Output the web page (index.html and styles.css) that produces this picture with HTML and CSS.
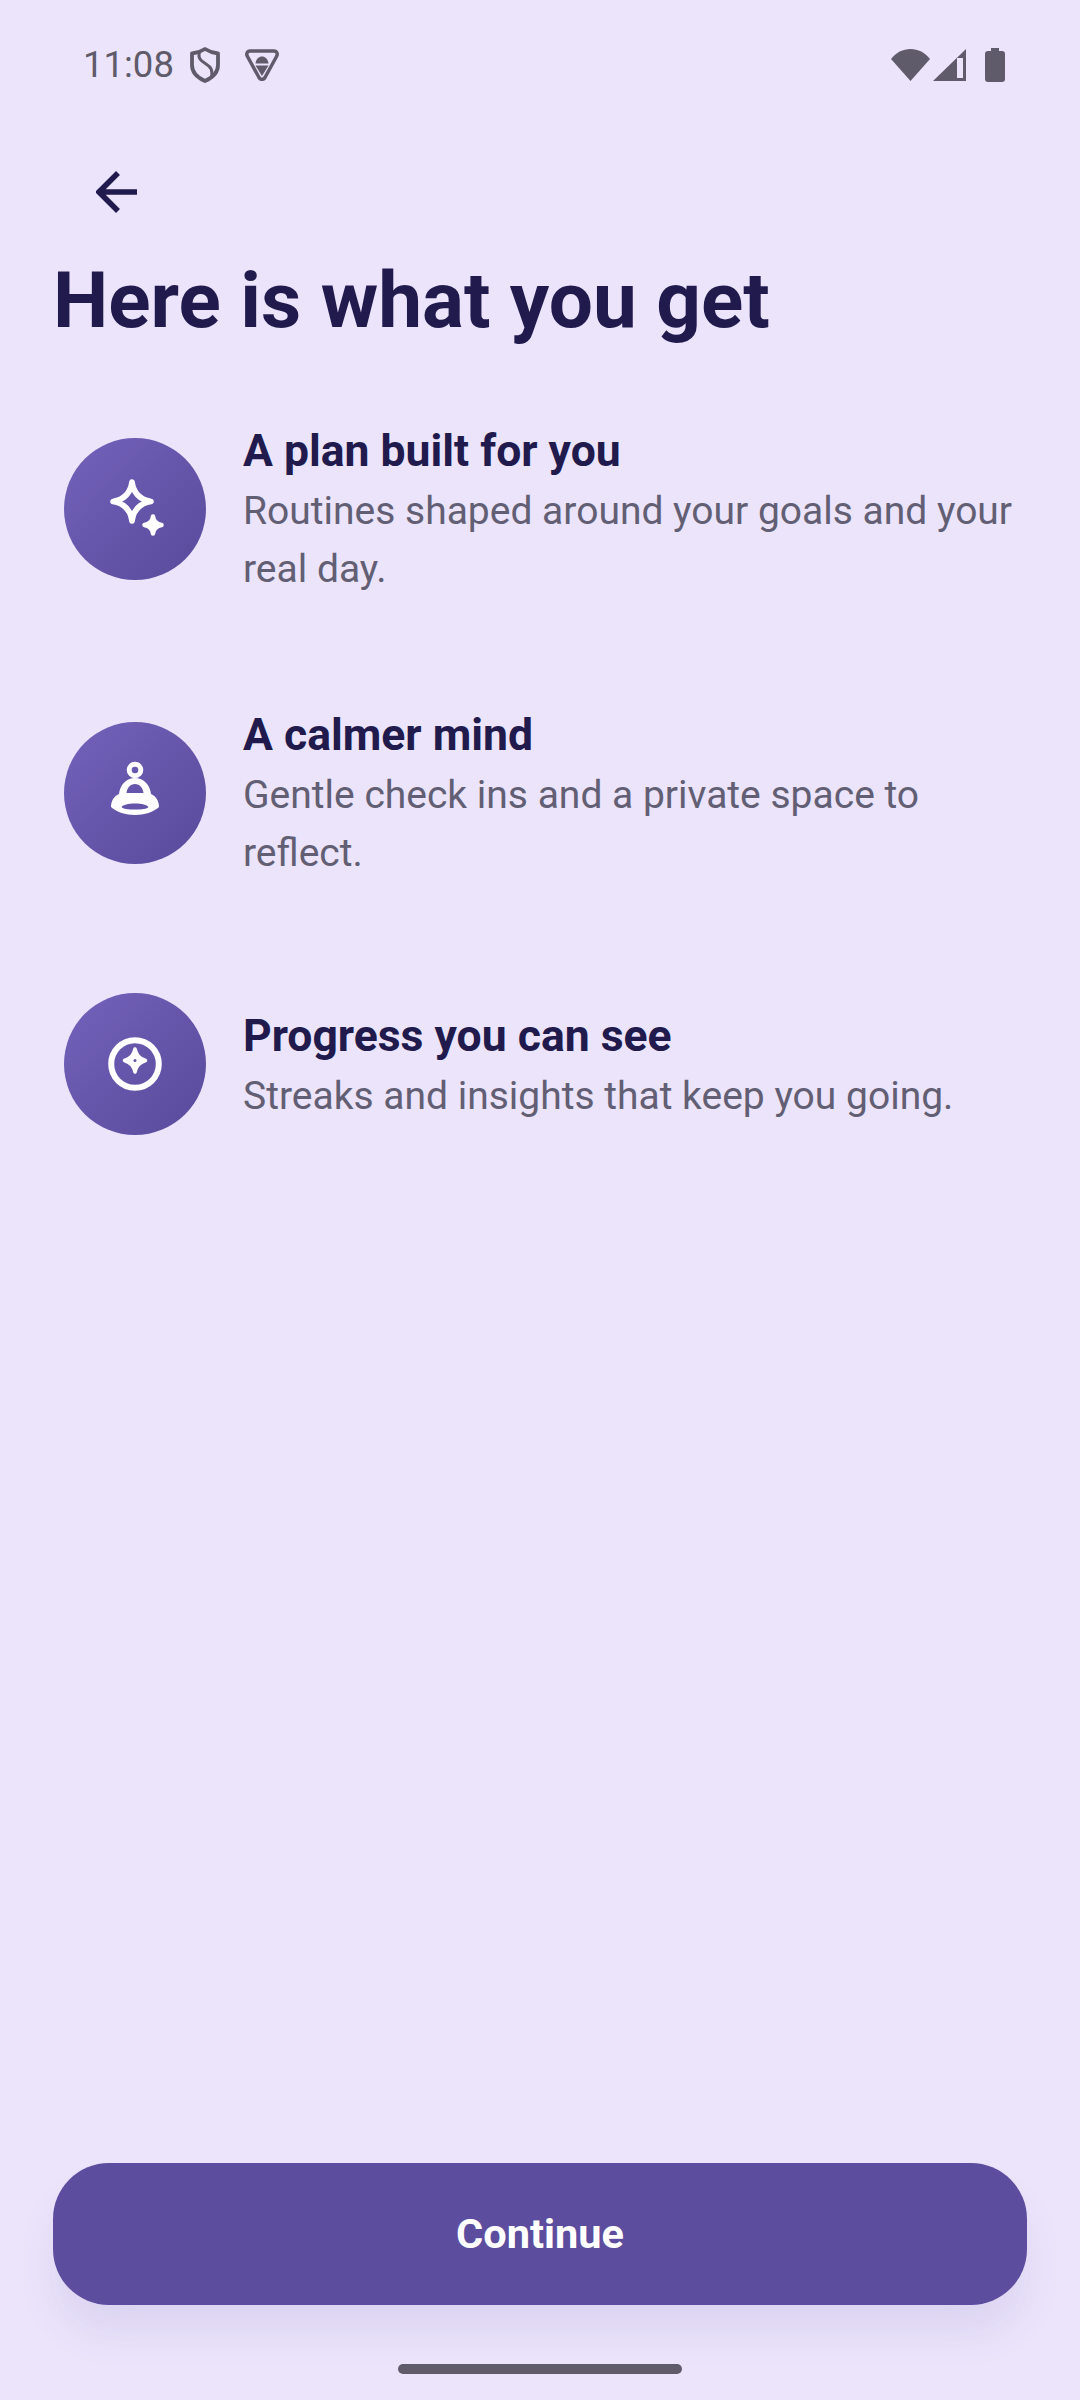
FILE: index.html
```html
<!DOCTYPE html>
<html lang="en">
<head>
<meta charset="utf-8">
<title>Here is what you get</title>
<link rel="stylesheet" href="styles.css">
</head>
<body>
<main class="page">
  <header class="status">
    <div class="status-left">
      <span class="time">11:08</span>
      <svg class="ic-shield" viewBox="0 0 30 36"><path d="M15 2 C19 4.500 23 6 28 6.500 V18 C28 26 22 31 15 34 C8 31 2 26 2 18 V6.500 C7 6 11 4.500 15 2 Z" fill="none" stroke="#5f5b6b" stroke-width="3.800" stroke-linejoin="round"/><path d="M10 4 C7 11 11 14 16 17 C21 20 23 23 21.500 31" fill="none" stroke="#5f5b6b" stroke-width="3"/></svg>
      <svg class="ic-tri" viewBox="0 0 34 32"><path d="M5 2 H29 C32 2 33 5 31.500 7.500 L20 28.500 C18.500 31 15.500 31 14 28.500 L2.500 7.500 C1 5 2 2 5 2 Z" fill="none" stroke="#5f5b6b" stroke-width="3.500"/><path d="M10.500 14.500 C11 10 14 7.500 17 7.500 C20 7.500 23 10 23.500 14.500 Z M10.500 16.500 H23.500 L17 27 Z" fill="#5f5b6b"/></svg>
    </div>
    <div class="status-right">
      <svg class="ic-wifi" viewBox="0 0 39 32"><path d="M0 10 C5 3.500 12 0 19.500 0 C27 0 34 3.500 39 10 L19.500 32 Z" fill="#5f5b6b"/></svg>
      <svg class="ic-signal" viewBox="0 0 33 32"><path fill-rule="evenodd" d="M33 0 V32 H0 Z M24 9 V29 H30 V9 Z" fill="#5f5b6b"/></svg>
      <svg class="ic-batt" viewBox="0 0 20 34"><path d="M6 0 H14 V3 H17 C19 3 20 4 20 6 V31 C20 33 19 34 17 34 H3 C1 34 0 33 0 31 V6 C0 4 1 3 3 3 H6 Z" fill="#5f5b6b"/></svg>
    </div>
  </header>

  <nav class="nav">
    <svg class="ic-back" viewBox="0 0 42 42"><path d="M41 21 H4 M22 2 L3 21 L22 40" fill="none" stroke="#211a4c" stroke-width="5.500"/></svg>
  </nav>

  <h1 class="title">Here is what you get</h1>

  <section class="list">
    <article class="item">
      <div class="badge">
        <svg viewBox="0 0 142 142"><path d="M68 44 C69.500 55 75 61.500 87 63.500 C75 65.500 69.500 72 68 83 C66.500 72 61 65.500 49 63.500 C61 61.500 66.500 55 68 44 Z" fill="none" stroke="#fff" stroke-width="5.600" stroke-linejoin="round"/><path d="M89 78.500 C89.500 83.500 92 86 97.500 87 C92 88 89.500 90.500 89 95.500 C88.500 90.500 86 88 80.500 87 C86 86 88.500 83.500 89 78.500 Z" fill="#fff" stroke="#fff" stroke-width="4.500" stroke-linejoin="round"/></svg>
      </div>
      <div class="copy">
        <h2 class="item-title">A plan built for you</h2>
        <p class="item-text">Routines shaped around your goals and your real day.</p>
      </div>
    </article>
    <article class="item">
      <div class="badge">
        <svg viewBox="0 0 142 142"><circle cx="71" cy="48" r="5.800" fill="none" stroke="#fff" stroke-width="5"/><path fill-rule="evenodd" d="M71 56 C80 56 86 63 87 72 C92 74 95 79 95 85 C90 90 80 93 71 93 C62 93 52 90 47 85 C47 79 50 74 55 72 C56 63 62 56 71 56 Z M71 62 C66 62 63 66 62.500 71 H79.500 C79 66 76 62 71 62 Z M71 81.500 C64 81.500 59 83 57.500 85 C59 87 64 87.500 71 87.500 C78 87.500 83 87 84.500 85 C83 83 78 81.500 71 81.500 Z" fill="#fff"/></svg>
      </div>
      <div class="copy">
        <h2 class="item-title">A calmer mind</h2>
        <p class="item-text">Gentle check ins and a private space to reflect.</p>
      </div>
    </article>
    <article class="item">
      <div class="badge">
        <svg viewBox="0 0 142 142"><circle cx="71" cy="71" r="23.800" fill="none" stroke="#fff" stroke-width="6"/><path d="M71 56 C72.500 62 75 65 81.500 67.500 C75 70 72.500 73 71 79 C69.500 73 67 70 60.500 67.500 C67 65 69.500 62 71 56 Z" fill="#fff" stroke="#fff" stroke-width="3.500" stroke-linejoin="round"/><circle cx="71" cy="67.500" r="1.500" fill="#6555a8"/></svg>
      </div>
      <div class="copy">
        <h2 class="item-title">Progress you can see</h2>
        <p class="item-text">Streaks and insights that keep you going.</p>
      </div>
    </article>
  </section>

  <button class="cta">Continue</button>
  <div class="home-bar"></div>
</main>
</body>
</html>
```
FILE: styles.css
```css
* { box-sizing: border-box; }
html, body { margin: 0; padding: 0; }
body { background: #ebe4fb; font-family: Roboto, "Liberation Sans", sans-serif; }
.page { width: 1080px; height: 2400px; display: flex; flex-direction: column; overflow: hidden; background: #ebe4fb; }

.status { height: 130px; flex: none; display: flex; align-items: center; justify-content: space-between; padding: 0 75px 0 83px; }
.status-left, .status-right { display: flex; align-items: center; }
.time { font-size: 36.500px; line-height: 42px; color: #5f5b6b; }
.ic-shield { width: 30px; height: 36px; margin-left: 16px; }
.ic-tri { width: 34px; height: 32px; margin-left: 25px; }
.ic-wifi { width: 39px; height: 32px; }
.ic-signal { width: 33px; height: 32px; margin-left: 3px; }
.ic-batt { width: 20px; height: 34px; margin-left: 19px; }

.nav { flex: none; margin-top: 41px; height: 42px; padding-left: 96px; display: flex; }
.ic-back { width: 42px; height: 42px; }

.title { flex: none; margin: 43px 0 0 53px; font-size: 78.300px; line-height: 88px; font-weight: 700; color: #211a4c; }

.list { flex: none; margin-top: 75px; display: flex; flex-direction: column; gap: 105px; padding: 0 36px 0 64px; }
.item { display: flex; align-items: center; gap: 37px; min-height: 154px; }
.badge { flex: none; width: 142px; height: 142px; border-radius: 50%; background: linear-gradient(135deg, #7362ba, #584a9b); }
.badge svg { display: block; width: 142px; height: 142px; }
.copy { flex: 1; min-width: 0; padding-top: 7px; }
.item-title { margin: 0 0 6px; font-size: 44.500px; line-height: 50px; font-weight: 700; color: #211a4c; }
.item-text { margin: 0; font-size: 39px; line-height: 58px; color: #625e73; }

.cta { flex: none; margin: auto 53px 0; height: 142px; border: 0; border-radius: 56px; background: #5c4d9e; color: #fff; font: 700 41.500px/50px Roboto, "Liberation Sans", sans-serif; box-shadow: 0 30px 40px -4px rgba(91, 75, 156, 0.1); }
.home-bar { flex: none; align-self: center; width: 284px; height: 10px; margin: 59px 0 26px; border-radius: 5px; background: #5f5b6b; }
```
